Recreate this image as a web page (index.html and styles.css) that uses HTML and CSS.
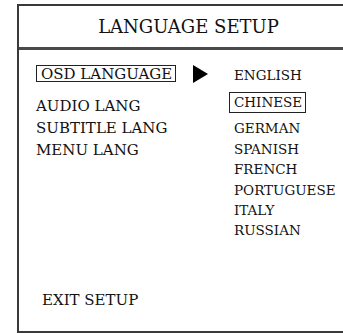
FILE: index.html
```html
<!DOCTYPE html>
<html lang="en">
<head>
    <meta charset="UTF-8">
    <meta name="viewport" content="width=device-width, initial-scale=1.0">
    <title>Language Setup</title>
    <link rel="stylesheet" href="styles.css">
</head>
<body>
    <div class="setup">
        <div class="title">LANGUAGE SETUP</div>

        <div class="content">
            <ul class="menu">
                <li class="menu-item selected">OSD LANGUAGE</li>
                <li class="menu-item">AUDIO LANG</li>
                <li class="menu-item">SUBTITLE LANG</li>
                <li class="menu-item">MENU LANG</li>
            </ul>

            <svg class="arrow" width="15" height="18" viewBox="0 0 15 18">
                <polygon points="0,0 15,9 0,18" fill="#000"/>
            </svg>

            <ul class="options">
                <li class="option">ENGLISH</li>
                <li class="option current">CHINESE</li>
                <li class="option">GERMAN</li>
                <li class="option">SPANISH</li>
                <li class="option">FRENCH</li>
                <li class="option">PORTUGUESE</li>
                <li class="option">ITALY</li>
                <li class="option">RUSSIAN</li>
            </ul>
        </div>

        <div class="exit">EXIT SETUP</div>
    </div>
</body>
</html>
```

FILE: styles.css
```css
html, body {
    margin: 0;
    background-color: #fff;
}
body {
    font-family: "DejaVu Serif", "Liberation Serif", serif;
    color: #111;
}
ul {
    list-style: none;
    margin: 0;
    padding: 0;
}
.setup {
    box-sizing: border-box;
    width: 326px;
    height: 329px;
    margin: 4px 0 0 17px;
    border-top: 2px solid #3a3a3a;
    border-left: 2px solid #3a3a3a;
    border-bottom: 2px solid #3a3a3a;
    display: flex;
    flex-direction: column;
}
.title {
    height: 41px;
    line-height: 41px;
    font-size: 18px;
    text-align: center;
    padding-left: 15px;
    border-bottom: 3px solid #4a4a4a;
}
.content {
    display: grid;
    grid-template-columns: 157px 15px 1fr;
    align-items: start;
    padding: 14px 0 0 17px;
}
.menu-item {
    font-size: 15px;
    line-height: 22px;
    white-space: nowrap;
}
.menu-item.selected {
    display: inline-block;
    line-height: 14px;
    padding: 1px 3px 0 4px;
    margin-bottom: 13px;
    border: 1px solid #222;
}
.arrow {
    margin-top: 1px;
    display: block;
}
.options {
    padding-top: 1px;
    margin-left: 26px;
}
.option {
    font-size: 13.5px;
    line-height: 20.4px;
    white-space: nowrap;
}
.option.current {
    display: inline-block;
    line-height: 19px;
    padding: 0 3px 0 4px;
    margin: 7px 0 5px -5px;
    border: 1px solid #222;
}
.exit {
    margin-top: auto;
    padding: 0 0 20px 23px;
    font-size: 15px;
    line-height: 22px;
}
```
